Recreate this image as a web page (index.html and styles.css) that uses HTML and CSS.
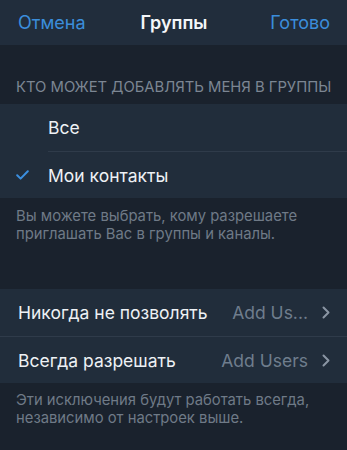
FILE: index.html
```html
<!DOCTYPE html>
<html lang="ru">
<head>
<meta charset="utf-8">
<link rel="stylesheet" href="styles.css">
</head>
<body>
<div class="screen">
  <header class="nav">
    <span class="nav-btn">Отмена</span>
    <span class="nav-title">Группы</span>
    <span class="nav-btn right">Готово</span>
  </header>

  <div class="section-header">КТО МОЖЕТ ДОБАВЛЯТЬ МЕНЯ В ГРУППЫ</div>
  <div class="group">
    <div class="row check-row">
      <span class="check"></span>
      <span class="label">Все</span>
    </div>
    <div class="row check-row">
      <span class="check">
        <svg width="13" height="10" viewBox="0 0 13 10"><path d="M1.2 5.2 L4.6 8.6 L11.8 1.2" fill="none" stroke="#3b8fe0" stroke-width="2" stroke-linecap="round" stroke-linejoin="round"/></svg>
      </span>
      <span class="label">Мои контакты</span>
    </div>
  </div>
  <div class="section-footer">Вы можете выбрать, кому разрешаете приглашать Вас в группы и каналы.</div>

  <div class="group">
    <div class="row link-row">
      <span class="label">Никогда не позволять</span>
      <span class="value">Add Us...</span>
      <svg class="chev" width="8" height="13" viewBox="0 0 8 13"><path d="M1.5 1.5 L6.5 6.5 L1.5 11.5" fill="none" stroke="#8a95a3" stroke-width="2" stroke-linecap="round" stroke-linejoin="round"/></svg>
    </div>
    <div class="row link-row">
      <span class="label">Всегда разрешать</span>
      <span class="value">Add Users</span>
      <svg class="chev" width="8" height="13" viewBox="0 0 8 13"><path d="M1.5 1.5 L6.5 6.5 L1.5 11.5" fill="none" stroke="#8a95a3" stroke-width="2" stroke-linecap="round" stroke-linejoin="round"/></svg>
    </div>
  </div>
  <div class="section-footer last">Эти исключения будут работать всегда, независимо от настроек выше.</div>
</div>
</body>
</html>
```

FILE: styles.css
```css
* { box-sizing: border-box; }
html, body {
  margin: 0;
  padding: 0;
  background: #1a222d;
}
body {
  font-family: "Inter", "Open Sans", sans-serif;
  color: #eef1f5;
  width: 347px;
  height: 450px;
  overflow: hidden;
}
.screen {
  display: flex;
  flex-direction: column;
}
.nav {
  height: 45px;
  background: #212d3c;
  display: grid;
  grid-template-columns: 1fr auto 1fr;
  align-items: center;
  padding: 0 17px 0 18px;
  font-size: 18px;
}
.nav-btn {
  color: #3b8ddb;
}
.nav-btn.right {
  justify-self: end;
}
.nav-title {
  color: #f4f6f9;
  font-weight: 600;
}
.section-header {
  padding: 33px 14px 8px 16px;
  font-size: 14.8px;
  line-height: 18px;
  color: #7c8693;
  white-space: nowrap;
}
.group {
  background: #212d3b;
  display: flex;
  flex-direction: column;
}
.row {
  height: 47px;
  display: flex;
  align-items: center;
  font-size: 17.5px;
}
.check-row {
  padding-left: 16px;
}
.check {
  width: 32px;
  display: flex;
  align-items: center;
}
.check-row + .check-row {
  border-top: 1px solid #2f3b4a;
  margin-left: 48px;
  padding-left: 0;
}
.check-row + .check-row .check {
  margin-left: -32px;
}
.section-footer {
  padding: 9px 16px 0;
  font-size: 14.8px;
  line-height: 18px;
  color: #6f7a87;
  height: 91px;
}
.section-footer.last {
  padding-top: 8px;
  height: 66px;
}
.link-row {
  padding: 0 17px 0 18px;
}
.link-row + .link-row {
  border-top: 1px solid #2f3b4a;
}
.link-row .label {
  flex: 1;
}
.value {
  color: #6f7d8d;
  margin-right: 14px;
}
.chev {
  display: block;
}
```
